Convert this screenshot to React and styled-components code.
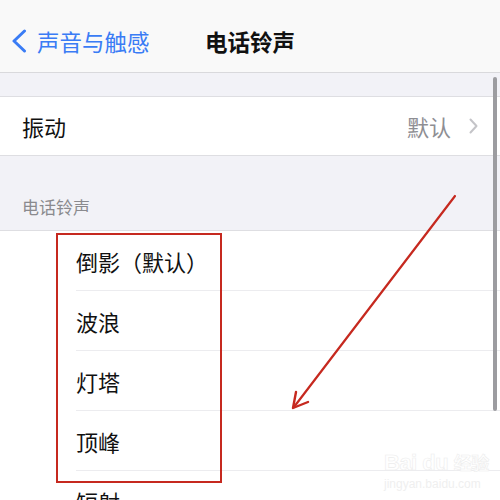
import React from 'react'
import styled, { createGlobalStyle } from 'styled-components'

const GlobalStyle = createGlobalStyle`
    html, body {
        margin: 0;
        padding: 0;
        background: #f2f2f7;
    }
    body {
        font-family: "Noto Sans CJK SC", "Noto Sans", sans-serif;
    }
`

const Screen = styled.div`
    position: relative;
    width: 500px;
    height: 500px;
    overflow: hidden;
    background: #f2f2f7;
`

const NavBar = styled.div`
    display: flex;
    align-items: center;
    height: 73px;
    padding-top: 9px;
    box-sizing: border-box;
    background: #f9f9f9;
    border-bottom: 1px solid #d9d9dc;
`

const BackButton = styled.div`
    display: flex;
    align-items: center;
    gap: 10px;
    padding-left: 11px;
    color: #3a7cf5;
    font-size: 22.5px;
    width: 205px;
    box-sizing: border-box;
`

const Title = styled.div`
    font-size: 22.5px;
    font-weight: 700;
    color: #111;
`

const Spacer = styled.div`
    height: ${(p) => p.h}px;
`

const Group = styled.div`
    background: #fff;
    border-top: 1px solid #dedee2;
    border-bottom: ${(p) => (p.open ? 'none' : '1px solid #dedee2')};
`

const Row = styled.div`
    display: flex;
    align-items: center;
    height: 58px;
    padding: 0 22px;
    font-size: 22px;
    color: #111;
`

const Value = styled.span`
    margin-left: auto;
    color: #8e8e93;
    margin-right: 18px;
`

const SectionHeader = styled.div`
    display: flex;
    align-items: flex-end;
    height: 74px;
    padding: 0 22px 11px;
    box-sizing: border-box;
    font-size: 17px;
    color: #8a8a8e;
`

const ToneRow = styled.div`
    display: flex;
    align-items: center;
    height: 59px;
    margin-left: 76px;
    font-size: 22px;
    color: #111;
    border-bottom: 1px solid #ececef;
`

const ScrollBar = styled.div`
    position: absolute;
    right: 3px;
    top: 77px;
    width: 4px;
    height: 334px;
    border-radius: 2px;
    background: #9c9ca0;
`

const Highlight = styled.div`
    position: absolute;
    left: 56px;
    top: 233px;
    width: 166px;
    height: 250px;
    border: 2px solid #c6291f;
    box-sizing: border-box;
`

const ArrowLayer = styled.svg`
    position: absolute;
    left: 0;
    top: 0;
    pointer-events: none;
`

const Watermark = styled.div`
    position: absolute;
    left: 384px;
    top: 452px;
    display: flex;
    flex-direction: column;
    align-items: flex-start;
    color: #fff;
    font-family: "Liberation Sans", sans-serif;
    -webkit-text-stroke: 0.6px #ededed;
    line-height: 1;
`

const MarkTitle = styled.div`
    font-size: 22px;
    font-weight: 700;
    letter-spacing: -0.5px;
    span {
        font-family: "Noto Sans CJK SC", sans-serif;
        font-size: 18px;
    }
`

const MarkUrl = styled.div`
    font-size: 12px;
    margin-top: 4px;
    color: #efefef;
    -webkit-text-stroke: 0;
`

const tones = ['倒影（默认）', '波浪', '灯塔', '顶峰', '短射']

export default function App() {
    return (
        <Screen>
            <GlobalStyle />
            <NavBar>
                <BackButton>
                    <svg width="16" height="24" viewBox="0 0 16 24">
                        <path d="M13.5 2 L3 12 L13.5 22" fill="none" stroke="#3a7cf5" strokeWidth="3" strokeLinecap="round" strokeLinejoin="round" />
                    </svg>
                    声音与触感
                </BackButton>
                <Title>电话铃声</Title>
            </NavBar>
            <Spacer h={23} />
            <Group>
                <Row>
                    振动
                    <Value>默认</Value>
                    <svg width="9" height="16" viewBox="0 0 9 16">
                        <path d="M1.5 1.5 L7.5 8 L1.5 14.5" fill="none" stroke="#c4c4c8" strokeWidth="2" strokeLinecap="round" strokeLinejoin="round" />
                    </svg>
                </Row>
            </Group>
            <SectionHeader>电话铃声</SectionHeader>
            <Group open>
                {tones.map((t) => (
                    <ToneRow key={t}>{t}</ToneRow>
                ))}
            </Group>
            <ScrollBar />
            <Watermark>
                <MarkTitle>
                    Bai du <span>经验</span>
                </MarkTitle>
                <MarkUrl>jingyan.baidu.com</MarkUrl>
            </Watermark>
            <Highlight />
            <ArrowLayer width="500" height="500" viewBox="0 0 500 500">
                <line x1="455" y1="196" x2="294" y2="407" stroke="#c6291f" strokeWidth="2.2" strokeLinecap="round" />
                <path d="M296 392 L293 408 L308 402" fill="none" stroke="#c6291f" strokeWidth="2.4" strokeLinecap="round" strokeLinejoin="round" />
            </ArrowLayer>
        </Screen>
    )
}
